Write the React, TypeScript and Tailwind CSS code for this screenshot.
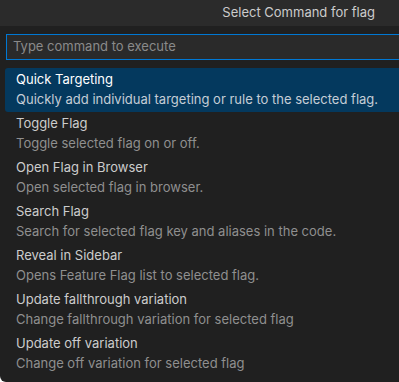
const commands = [
  { title: 'Quick Targeting', desc: 'Quickly add individual targeting or rule to the selected flag.' },
  { title: 'Toggle Flag', desc: 'Toggle selected flag on or off.' },
  { title: 'Open Flag in Browser', desc: 'Open selected flag in browser.' },
  { title: 'Search Flag', desc: 'Search for selected flag key and aliases in the code.' },
  { title: 'Reveal in Sidebar', desc: 'Opens Feature Flag list to selected flag.' },
  { title: 'Update fallthrough variation', desc: 'Change fallthrough variation for selected flag' },
  { title: 'Update off variation', desc: 'Change off variation for selected flag' },
];

export default function App() {
  return (
    <div
      className="w-[399px] h-[382px] overflow-hidden bg-[#202020] rounded-bl-[6px] text-[13px]"
      style={{ fontFamily: 'Inter, "Liberation Sans", sans-serif' }}
    >
      <div className="h-[26px] bg-[#2b2b2b] flex items-center justify-end pr-[24px] text-[#cccccc]">
        Select Command for flag
      </div>
      <div className="pt-[8px] pl-[6px]">
        <div className="h-[26px] border border-[#0078d4] border-r-0 bg-[#2a2a2a] flex items-center pl-[6px] text-[#8a8a8a]">
          Type command to execute
        </div>
      </div>
      <div className="pt-[8px] pl-[5px]">
        {commands.map((c, i) => (
          <div
            key={c.title}
            className={
              i === 0
                ? 'h-[44px] pl-[11px] pt-[1px] rounded-l-[3px] bg-[#04395e]'
                : 'h-[44px] pl-[11px] pt-[1px]'
            }
          >
            <div className={i === 0 ? 'leading-[20px] text-white' : 'leading-[20px] text-[#cccccc]'}>
              {c.title}
            </div>
            <div className={i === 0 ? 'leading-[20px] text-[#c5cdd6]' : 'leading-[20px] text-[#8f8f8f]'}>
              {c.desc}
            </div>
          </div>
        ))}
      </div>
    </div>
  );
}
